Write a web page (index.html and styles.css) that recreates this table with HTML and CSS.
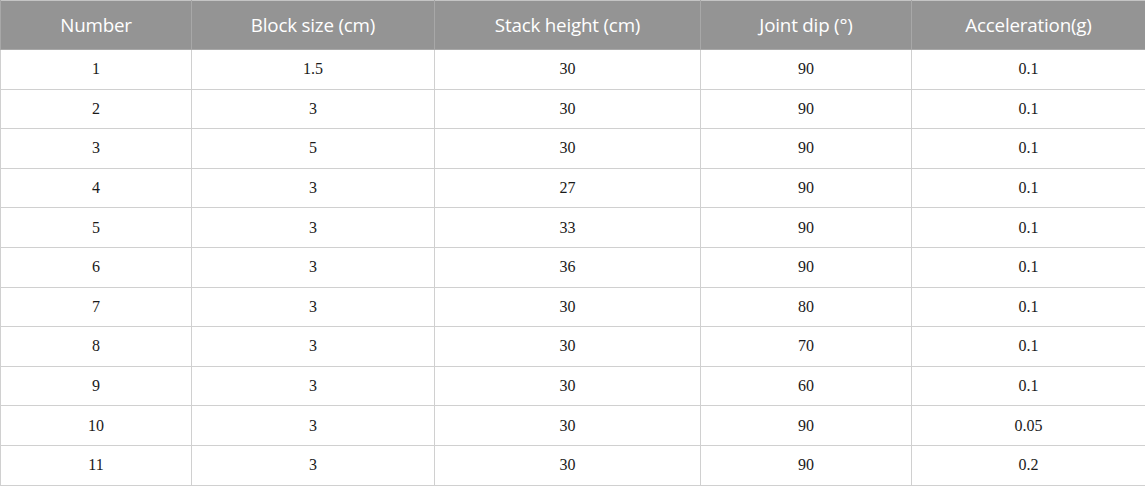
FILE: index.html
```html
<!DOCTYPE html>
<html>
<head>
<meta charset="utf-8">
<link rel="stylesheet" href="styles.css">
</head>
<body>
<table class="data">
  <colgroup>
    <col class="c1"><col class="c2"><col class="c3"><col class="c4"><col class="c5">
  </colgroup>
  <thead>
    <tr class="head">
      <th>Number</th><th>Block size (cm)</th><th>Stack height (cm)</th><th>Joint dip (°)</th><th>Acceleration(g)</th>
    </tr>
  </thead>
  <tbody>
    <tr><td>1</td><td>1.5</td><td>30</td><td>90</td><td>0.1</td></tr>
    <tr><td>2</td><td>3</td><td>30</td><td>90</td><td>0.1</td></tr>
    <tr><td>3</td><td>5</td><td>30</td><td>90</td><td>0.1</td></tr>
    <tr><td>4</td><td>3</td><td>27</td><td>90</td><td>0.1</td></tr>
    <tr><td>5</td><td>3</td><td>33</td><td>90</td><td>0.1</td></tr>
    <tr><td>6</td><td>3</td><td>36</td><td>90</td><td>0.1</td></tr>
    <tr><td>7</td><td>3</td><td>30</td><td>80</td><td>0.1</td></tr>
    <tr><td>8</td><td>3</td><td>30</td><td>70</td><td>0.1</td></tr>
    <tr><td>9</td><td>3</td><td>30</td><td>60</td><td>0.1</td></tr>
    <tr><td>10</td><td>3</td><td>30</td><td>90</td><td>0.05</td></tr>
    <tr><td>11</td><td>3</td><td>30</td><td>90</td><td>0.2</td></tr>
  </tbody>
</table>
</body>
</html>
```

FILE: styles.css
```css
html, body {
  margin: 0;
  padding: 0;
  background: #ffffff;
}
.data {
  width: 1145px;
  border-collapse: collapse;
  table-layout: fixed;
  border: 1px solid #c4c4c4;
}
.c1 { width: 191px; }
.c2 { width: 243px; }
.c3 { width: 266px; }
.c4 { width: 211px; }
.c5 { width: 234px; }
.head th {
  height: 48px;
  padding: 0;
  background: #949494;
  color: #ffffff;
  font-family: "Open Sans", "Noto Sans", sans-serif;
  font-weight: 400;
  font-size: 18.8px;
  letter-spacing: -0.2px;
  text-align: center;
  border: 1px solid #a8a8a8;
  border-top: none;
}
td {
  height: 38.6px;
  padding: 0;
  text-align: center;
  font-family: "Liberation Serif", "Times New Roman", serif;
  font-size: 16px;
  color: #1a1a1a;
  border: 1px solid #d0d0d0;
}
```
